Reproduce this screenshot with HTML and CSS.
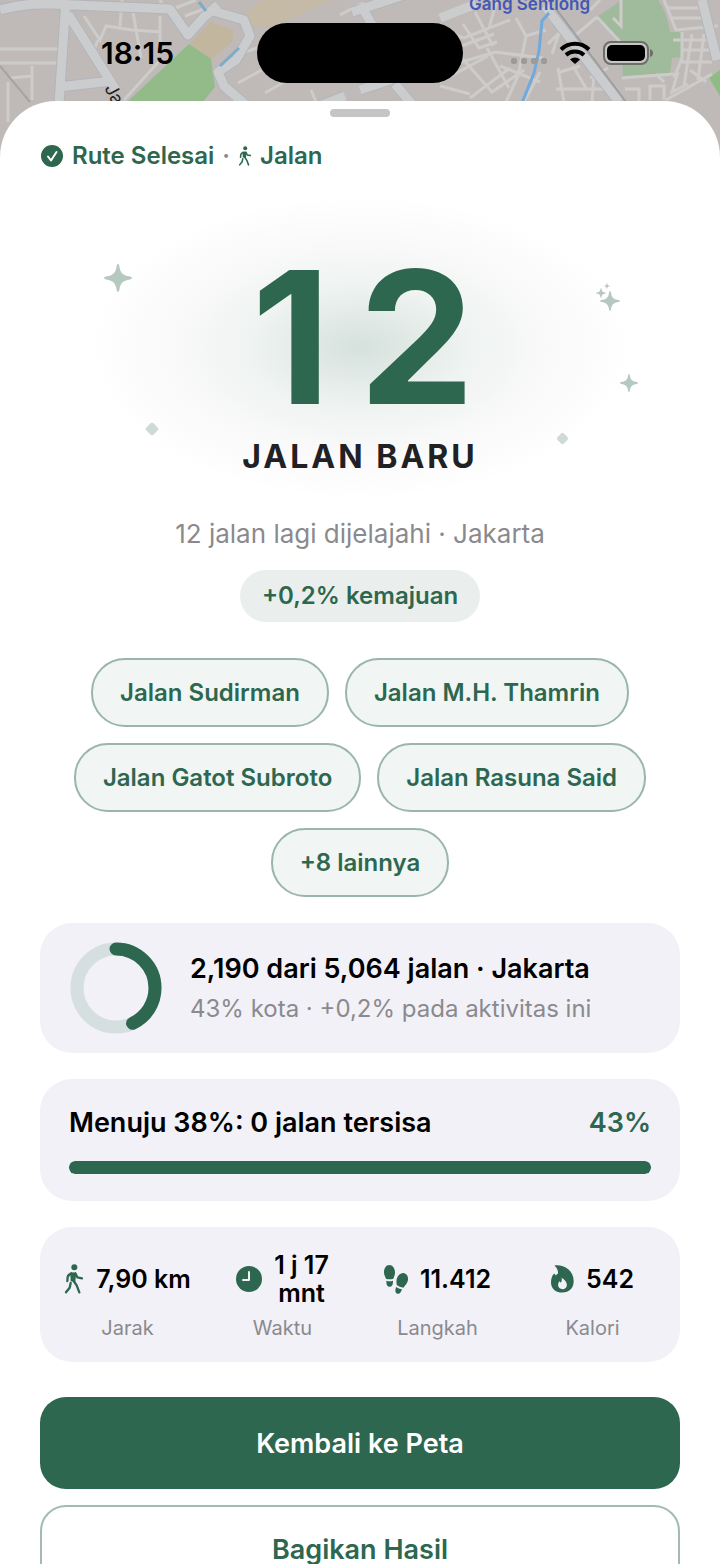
FILE: index.html
```html
<!doctype html>
<html lang="id">
<head>
  <meta charset="UTF-8">
  <meta name="viewport" content="width=device-width, initial-scale=1">
  <title>Rute Selesai</title>

  <link rel="stylesheet" href="styles.css">
</head>
<body>

<!-- shared icons -->
<svg class="defs" width="0" height="0" aria-hidden="true">
  <symbol id="walk" viewBox="0 0 56 90">
    <circle cx="29" cy="10" r="9" fill="currentColor"/>
    <path d="M17 29q9-9 18 0l-2 13-1 12-14-2z" fill="currentColor"/>
    <path d="M20 28q-10 5-11 11l-1 12M32 28l6 12 14 3M27 51l9 13 8 21M18 57l-3 14-11 14" fill="none" stroke="currentColor" stroke-width="7" stroke-linecap="round" stroke-linejoin="round"/>
  </symbol>
  <symbol id="sparkle" viewBox="0 0 28 28">
    <path d="M14 0q1 0 1.300 2c1 7 3.500 9.500 10.700 10.600q2 .4 2 1.400t-2 1.400c-7.200 1.100-9.700 3.600-10.700 10.600q-.3 2-1.300 2t-1.300-2c-1-7-3.500-9.500-10.700-10.600q-2-.4-2-1.400t2-1.400c7.200-1.100 9.700-3.600 10.700-10.600q.3-2 1.300-2z" fill="currentColor"/>
  </symbol>
</svg>

<div class="screen">
  <svg class="map" viewBox="0 0 720 170" preserveAspectRatio="xMidYMin slice" aria-hidden="true">
    <rect width="720" height="170" fill="#bfbab7"/>
    <path d="M262 0h68l-55 26-28 2-2-14z" fill="#c4baa5"/>
    <path d="M210 22l24 8-2 12-22 18-20-16z" fill="#c2b69f"/>
    <path d="M189 44l22 15 4 28-13 16h-76z" fill="#93bb89"/>
    <path d="M597 17l25-17h36q9 12 12 32h12l-1 25-9 1-2 15-47 3-2-31z" fill="#a0bb9c"/>
    <path d="M709 78l11-8v26z" fill="#8fbb85"/>

    <g class="lane">
      <path d="M0 49h60M0 63h60M10 78l22-2M32 66v34M8 82v40M84 16l16 24 6-14 26 4 30 2M98 40l-6 14M122 0l-2 26M133 12l8 46M160 16v30M170 10l26-10M185 16l22-8M160 0l6 12M54 6l36-3"/>
      <path d="M162 58l-38 42M238 83l40-22M245 52l18-6M265 93l45-26M311 90l6 14M340 15l22-12"/>
      <path d="M440 30l24 8 46-18M463 24l16 24 18-6M475 12l18 34M440 54l54-20M455 64l40-12 48 6M440 82l48-26M487 48l22 40M462 58l30 34 32-22M470 98l40-30M497 0l-8 28M516 18l10 18 20-6M526 36l-8 40-12 26M440 86l30 8M500 66l40 16M540 72l-16 30"/>
      <path d="M548 44l14-14 14 4M560 30l-8 24M597 17l-26 22M597 17l26 28M573 66l14 24M560 72l20-6M556 89h50M558 68l6 34M594 74l-2 28M590 78l18-10M622 78l52-4M600 0l-10 10"/>
      <path d="M621 0v26l-8-8M625 89h14v12M650 100v-14h14v14M664 82l-8-8M678 72l-6 20 16-8M664 0l12 30 42-4M668 8h40M672 18h40M682 32v26l-8 20M673 40h40M682 50h34M680 62h32M692 34l-8 52M704 34l-6 46M700 0l6 32M712 74l-46 26M690 70l16 12"/>
    </g>
    <g class="edge">
      <path d="M0 10q24-7 50-6l120 5 18 26 16-18 14-12M66 0l-7 104M58 87l54-6M68 14l48 76M352 12l92-30M395 84l20 24M345 96l-30 12M360 90l36-12M360 4l14 24M545 6l74 96M702 0l15 60"/>
      <path d="M210 10l34 10 6 16-14 24-18 12 6 14 30 26"/>
    </g>
    <g class="road">
      <path d="M0 10q24-7 50-6l120 5 18 26 16-18 14-12M66 0l-7 104M58 87l54-6M68 14l48 76M352 12l92-30M395 84l20 24M345 96l-30 12M360 90l36-12M360 4l14 24M545 6l74 96M702 0l15 60"/>
      <path d="M210 10l34 10 6 16-14 24-18 12 6 14 30 26"/>
      <path d="M440 18l36-14"/>
    </g>
    <path d="M0 66l30 36" stroke="#a5a3a3" stroke-width="2" fill="none"/>
    <path d="M557 10l69 92" stroke="#a09e9e" stroke-width="2" fill="none"/>
    <path d="M199 2l7 9M220 66l19-18" stroke="#7cacc8" stroke-width="3" fill="none"/>
    <path d="M549 13l-7 8-3 30-5 22-12 30" stroke="#72a9dc" stroke-width="3" fill="none"/>
    <text class="street" x="469" y="10">Gang Sentiong</text>
    <text class="street-dark" transform="translate(104 88) rotate(62)">Jalan</text>
  </svg>

  <header class="status-bar">
    <time class="clock">18:15</time>
    <div class="island"></div>
    <div class="indicators">
      <svg width="36" height="24" viewBox="0 0 36 24" aria-hidden="true">
        <g fill="#9d9b9a">
          <rect y="17" width="6" height="6" rx="2"/>
          <rect x="10" y="17" width="6" height="6" rx="2"/>
          <rect x="20" y="17" width="6" height="6" rx="2"/>
          <rect x="30" y="17" width="6" height="6" rx="2"/>
        </g>
      </svg>
      <svg width="32" height="24" viewBox="0 0 32 24" aria-label="Wi-Fi">
        <path d="M2 8.500a20 20 0 0 1 28 0M7 14a13 13 0 0 1 18 0" fill="none" stroke="#000" stroke-width="4"/>
        <path d="M16 23l-5-4.500a7.200 7.200 0 0 1 10 0z"/>
      </svg>
      <svg width="50" height="24" viewBox="0 0 50 24" aria-label="Baterai">
        <rect x="1" y="1" width="44" height="22" rx="7" fill="#c6c6c4" stroke="#6d6d6a" stroke-width="2"/>
        <rect x="4" y="4" width="38" height="16" rx="5"/>
        <path d="M47 8q3 1 3 4t-3 4z" fill="#6d6d6a"/>
      </svg>
    </div>
  </header>

  <main class="sheet">
    <div class="grabber"></div>

    <p class="summary">
      <svg class="check" viewBox="0 0 24 24" aria-hidden="true">
        <circle cx="12" cy="12" r="11" fill="currentColor"/>
        <path d="M8 12.500l3 4 5.500-8.500" fill="none" stroke="#fff" stroke-width="2" stroke-linecap="round" stroke-linejoin="round"/>
      </svg>
      <span>Rute Selesai</span>
      <span class="dot">·</span>
      <svg class="walk-small" aria-hidden="true"><use href="#walk"/></svg>
      <span>Jalan</span>
    </p>

    <section class="hero">
      <svg class="sparkle s1" aria-hidden="true"><use href="#sparkle"/></svg>
      <svg class="sparkle s2" viewBox="0 0 24 28" aria-hidden="true">
        <use href="#sparkle" x="4" y="8" width="20" height="20"/>
        <use href="#sparkle" x="0" y="5" width="10" height="10"/>
        <use href="#sparkle" x="8" y="0" width="6" height="6"/>
      </svg>
      <svg class="sparkle s3" aria-hidden="true"><use href="#sparkle"/></svg>
      <i class="diamond d1"></i>
      <i class="diamond d2"></i>
      <strong class="count">12</strong>
      <h1>JALAN BARU</h1>
    </section>

    <p class="subtitle">12 jalan lagi dijelajahi · Jakarta</p>
    <p class="badge">+0,2% kemajuan</p>

    <ul class="chips">
      <li>Jalan Sudirman</li>
      <li>Jalan M.H. Thamrin</li>
      <li>Jalan Gatot Subroto</li>
      <li>Jalan Rasuna Said</li>
      <li>+8 lainnya</li>
    </ul>

    <section class="card city">
      <svg class="ring" viewBox="0 0 92 92" aria-hidden="true">
        <circle cx="46" cy="46" r="39" fill="none" stroke="#d6dfdf" stroke-width="13"/>
        <circle cx="46" cy="46" r="39" fill="none" stroke="#2d674f" stroke-width="13" stroke-linecap="round" pathLength="100" stroke-dasharray="43 57" transform="rotate(-90 46 46)"/>
      </svg>
      <div>
        <h2>2,190 dari 5,064 jalan · Jakarta</h2>
        <p>43% kota · +0,2% pada aktivitas ini</p>
      </div>
    </section>

    <section class="card goal">
      <div class="goal-head">
        <label for="goal">Menuju 38%: 0 jalan tersisa</label>
        <span>43%</span>
      </div>
      <progress id="goal" value="100" max="100"></progress>
    </section>

    <dl class="card stats">
      <div>
        <dd>
          <svg width="20" height="30" aria-hidden="true"><use href="#walk"/></svg>
          7,90 km
        </dd>
        <dt>Jarak</dt>
      </div>
      <div>
        <dd>
          <svg width="26" height="26" viewBox="0 0 26 26" aria-hidden="true">
            <circle cx="13" cy="13" r="13" fill="currentColor"/>
            <path d="M13 6v8H7" fill="none" stroke="#f2f1f7" stroke-width="2" stroke-linecap="round" stroke-linejoin="round"/>
          </svg>
          <span>1 j 17<br>mnt</span>
        </dd>
        <dt>Waktu</dt>
      </div>
      <div>
        <dd>
          <svg width="24" height="29" viewBox="0 0 72 87" fill="currentColor" aria-hidden="true">
            <path d="M16 0c10 0 17 10 17 22 0 9-3 13-5 19q-12 4-22 0C4 35 0 31 0 22 0 10 6 0 16 0z"/>
            <path d="M7 47q10 3 20 0c0 11-2 18-10 18S7 58 7 47z"/>
            <path d="M61 25c10 3 13 14 10 24-3 9-8 13-13 19q-12-1-20-8c0-7-2-12 1-20 4-11 13-18 22-15z"/>
            <path d="M36 66q8 6 18 7c-3 9-7 15-14 13s-7-10-4-20z"/>
          </svg>
          11.412
        </dd>
        <dt>Langkah</dt>
      </div>
      <div>
        <dd>
          <svg width="23" height="28" viewBox="0 0 68 82" aria-hidden="true">
            <path d="M10 1c25-4 57 12 57 46 0 22-14 34-33 34S0 70 0 51c0-11 3-19 9-26l6 6c1-3 4-5 6-6C21 15 18 8 10 1z" fill="currentColor"/>
            <path d="M31 37c10 5 16 14 16 21 0 9-6 13-13 13s-13-5-13-12c0-5 2-8 4-11l4 4c3-5 4-10 2-15z" fill="#f2f1f7"/>
          </svg>
          542
        </dd>
        <dt>Kalori</dt>
      </div>
    </dl>

    <div class="actions">
      <button type="button" class="primary">Kembali ke Peta</button>
      <button type="button" class="secondary">Bagikan Hasil</button>
    </div>
  </main>
</div>

</body>
</html>
```
FILE: styles.css
```css
* {
    margin: 0;
    padding: 0;
    box-sizing: border-box;
}

body {
    background-color: #bfbab7;
    color: #000;
    font-family: Inter, "Liberation Sans", sans-serif;
    font-size: 24px;
}

.defs {
    position: absolute;
}

.screen {
    position: relative;
    height: 100vh;
    display: flex;
    flex-direction: column;
    overflow: hidden;
}

/* map behind the sheet */

.map {
    position: absolute;
    top: 0;
    left: 0;
    width: 100%;
    height: 170px;
}

.lane {
    fill: none;
    stroke: #cdccca;
    stroke-width: 3;
}

.edge {
    fill: none;
    stroke: #b1b5bc;
    stroke-width: 11;
    stroke-linejoin: round;
}

.road {
    fill: none;
    stroke: #cbccce;
    stroke-width: 9;
    stroke-linejoin: round;
}

.street {
    fill: #4358b5;
    font-size: 17px;
    font-weight: 600;
}

.street-dark {
    fill: #222;
    font-size: 18px;
}

/* status bar */

.status-bar {
    position: relative;
    flex: none;
    display: grid;
    grid-template-columns: 1fr 206px 1fr;
    align-items: center;
    padding: 23px 0 18px;
}

.clock {
    padding-left: 18px;
    text-align: center;
    font-size: 30px;
    font-weight: 600;
}

.island {
    height: 60px;
    background-color: #000;
    border-radius: 30px;
}

.indicators {
    display: flex;
    align-items: center;
    justify-content: center;
    gap: 12px;
    padding-right: 20px;
}

/* sheet */

.sheet {
    position: relative;
    flex: 1;
    min-height: 0;
    overflow-y: auto;
    scrollbar-width: none;
    padding: 8px 40px 40px;
    background-color: #fff;
    border-radius: 56px 56px 0 0;
    display: flex;
    flex-direction: column;
    align-items: center;
}

.sheet > * {
    flex: none;
}

.grabber {
    width: 60px;
    height: 8px;
    background-color: #c5c5c5;
    border-radius: 4px;
}

.summary {
    align-self: stretch;
    display: flex;
    align-items: center;
    gap: 8px;
    margin-top: 23px;
    color: #2d674f;
    font-size: 24px;
    line-height: 32px;
    font-weight: 600;
}

.summary .dot {
    color: #8a8a8e;
}

.check {
    width: 24px;
    height: 24px;
}

.walk-small {
    width: 14px;
    height: 20px;
}

.hero {
    position: relative;
    align-self: stretch;
    display: flex;
    flex-direction: column;
    align-items: center;
    margin-top: 23px;
    padding-top: 50px;
    height: 304px;
    background: radial-gradient(ellipse 270px 152px at center, rgba(45, 103, 79, .2), rgba(45, 103, 79, .08) 40%, rgba(60, 60, 60, .03) 68%, transparent);
}

.count {
    padding-left: 34px;
    color: #2d674f;
    font-size: 184px;
    line-height: 184px;
    font-weight: 700;
    letter-spacing: 28px;
}

.hero h1 {
    margin-top: 6px;
    color: #212123;
    font-size: 32px;
    line-height: 44px;
    font-weight: 700;
    letter-spacing: 3px;
}

.sparkle {
    position: absolute;
    color: #b5c9c0;
}

.s1 {
    top: 69px;
    left: 64px;
    width: 28px;
    height: 28px;
}

.s2 {
    top: 88px;
    right: 60px;
    width: 24px;
    height: 28px;
}

.s3 {
    top: 179px;
    right: 42px;
    width: 18px;
    height: 18px;
}

.diamond {
    position: absolute;
    width: 10px;
    height: 10px;
    background-color: #cfdad5;
    border-radius: 2px;
    transform: rotate(45deg);
}

.d1 {
    top: 229px;
    left: 107px;
}

.d2 {
    top: 239px;
    right: 113px;
    width: 9px;
    height: 9px;
}

.subtitle {
    margin-top: 17px;
    color: #8a8a8e;
    font-size: 26px;
    line-height: 36px;
}

.badge {
    margin-top: 18px;
    padding: 10px 22px;
    background-color: #eaefed;
    border-radius: 26px;
    color: #2d674f;
    font-size: 24px;
    line-height: 32px;
    font-weight: 600;
}

.chips {
    display: flex;
    flex-wrap: wrap;
    justify-content: center;
    gap: 16px;
    margin-top: 36px;
    list-style: none;
}

.chips li {
    padding: 17px 27px;
    background-color: #f1f5f4;
    border: 2px solid #9ab5aa;
    border-radius: 34px;
    color: #2d674f;
    font-size: 24px;
    line-height: 31px;
    font-weight: 600;
}

.card {
    align-self: stretch;
    margin-top: 26px;
    background-color: #f2f1f7;
    border-radius: 32px;
}

.city {
    display: flex;
    align-items: center;
    gap: 28px;
    padding: 19px 30px;
}

.ring {
    flex: none;
    width: 92px;
    height: 92px;
}

.city h2 {
    font-size: 27px;
    line-height: 42px;
    font-weight: 600;
}

.city p {
    color: #8a8a8e;
    font-size: 24px;
    line-height: 38px;
}

.goal {
    padding: 24px 29px 27px;
}

.goal-head {
    display: flex;
    justify-content: space-between;
    font-size: 27px;
    line-height: 40px;
    font-weight: 600;
}

.goal-head span {
    color: #2d674f;
}

progress {
    display: block;
    width: 100%;
    height: 13px;
    margin-top: 18px;
    appearance: none;
    border: 0;
    border-radius: 6px;
    overflow: hidden;
}

progress::-webkit-progress-bar {
    background-color: #d6dfdf;
}

progress::-webkit-progress-value {
    background-color: #2d674f;
    border-radius: 6px;
}

.stats {
    display: grid;
    grid-template-columns: repeat(4, 1fr);
    padding: 24px 10px 20px;
}

.stats > div {
    display: flex;
    flex-direction: column;
    align-items: center;
}

.stats dd {
    flex: 1;
    display: flex;
    align-items: center;
    gap: 12px;
    font-size: 25px;
    line-height: 28px;
    font-weight: 600;
    text-align: center;
    white-space: nowrap;
}

.stats dd svg {
    color: #2d674f;
}

.stats dt {
    margin-top: 7px;
    color: #8a8a8e;
    font-size: 20px;
    line-height: 28px;
}

.actions {
    align-self: stretch;
    display: flex;
    flex-direction: column;
    gap: 16px;
    margin-top: 35px;
}

.actions button {
    height: 92px;
    border-radius: 26px;
    font: 600 27px Inter, "Liberation Sans", sans-serif;
    cursor: pointer;
}

.primary {
    background-color: #2d674f;
    border: 0;
    color: #fff;
}

.actions .secondary {
    height: 88px;
    background-color: #fff;
    border: 2px solid #a3bbb1;
    color: #2d674f;
}
```
